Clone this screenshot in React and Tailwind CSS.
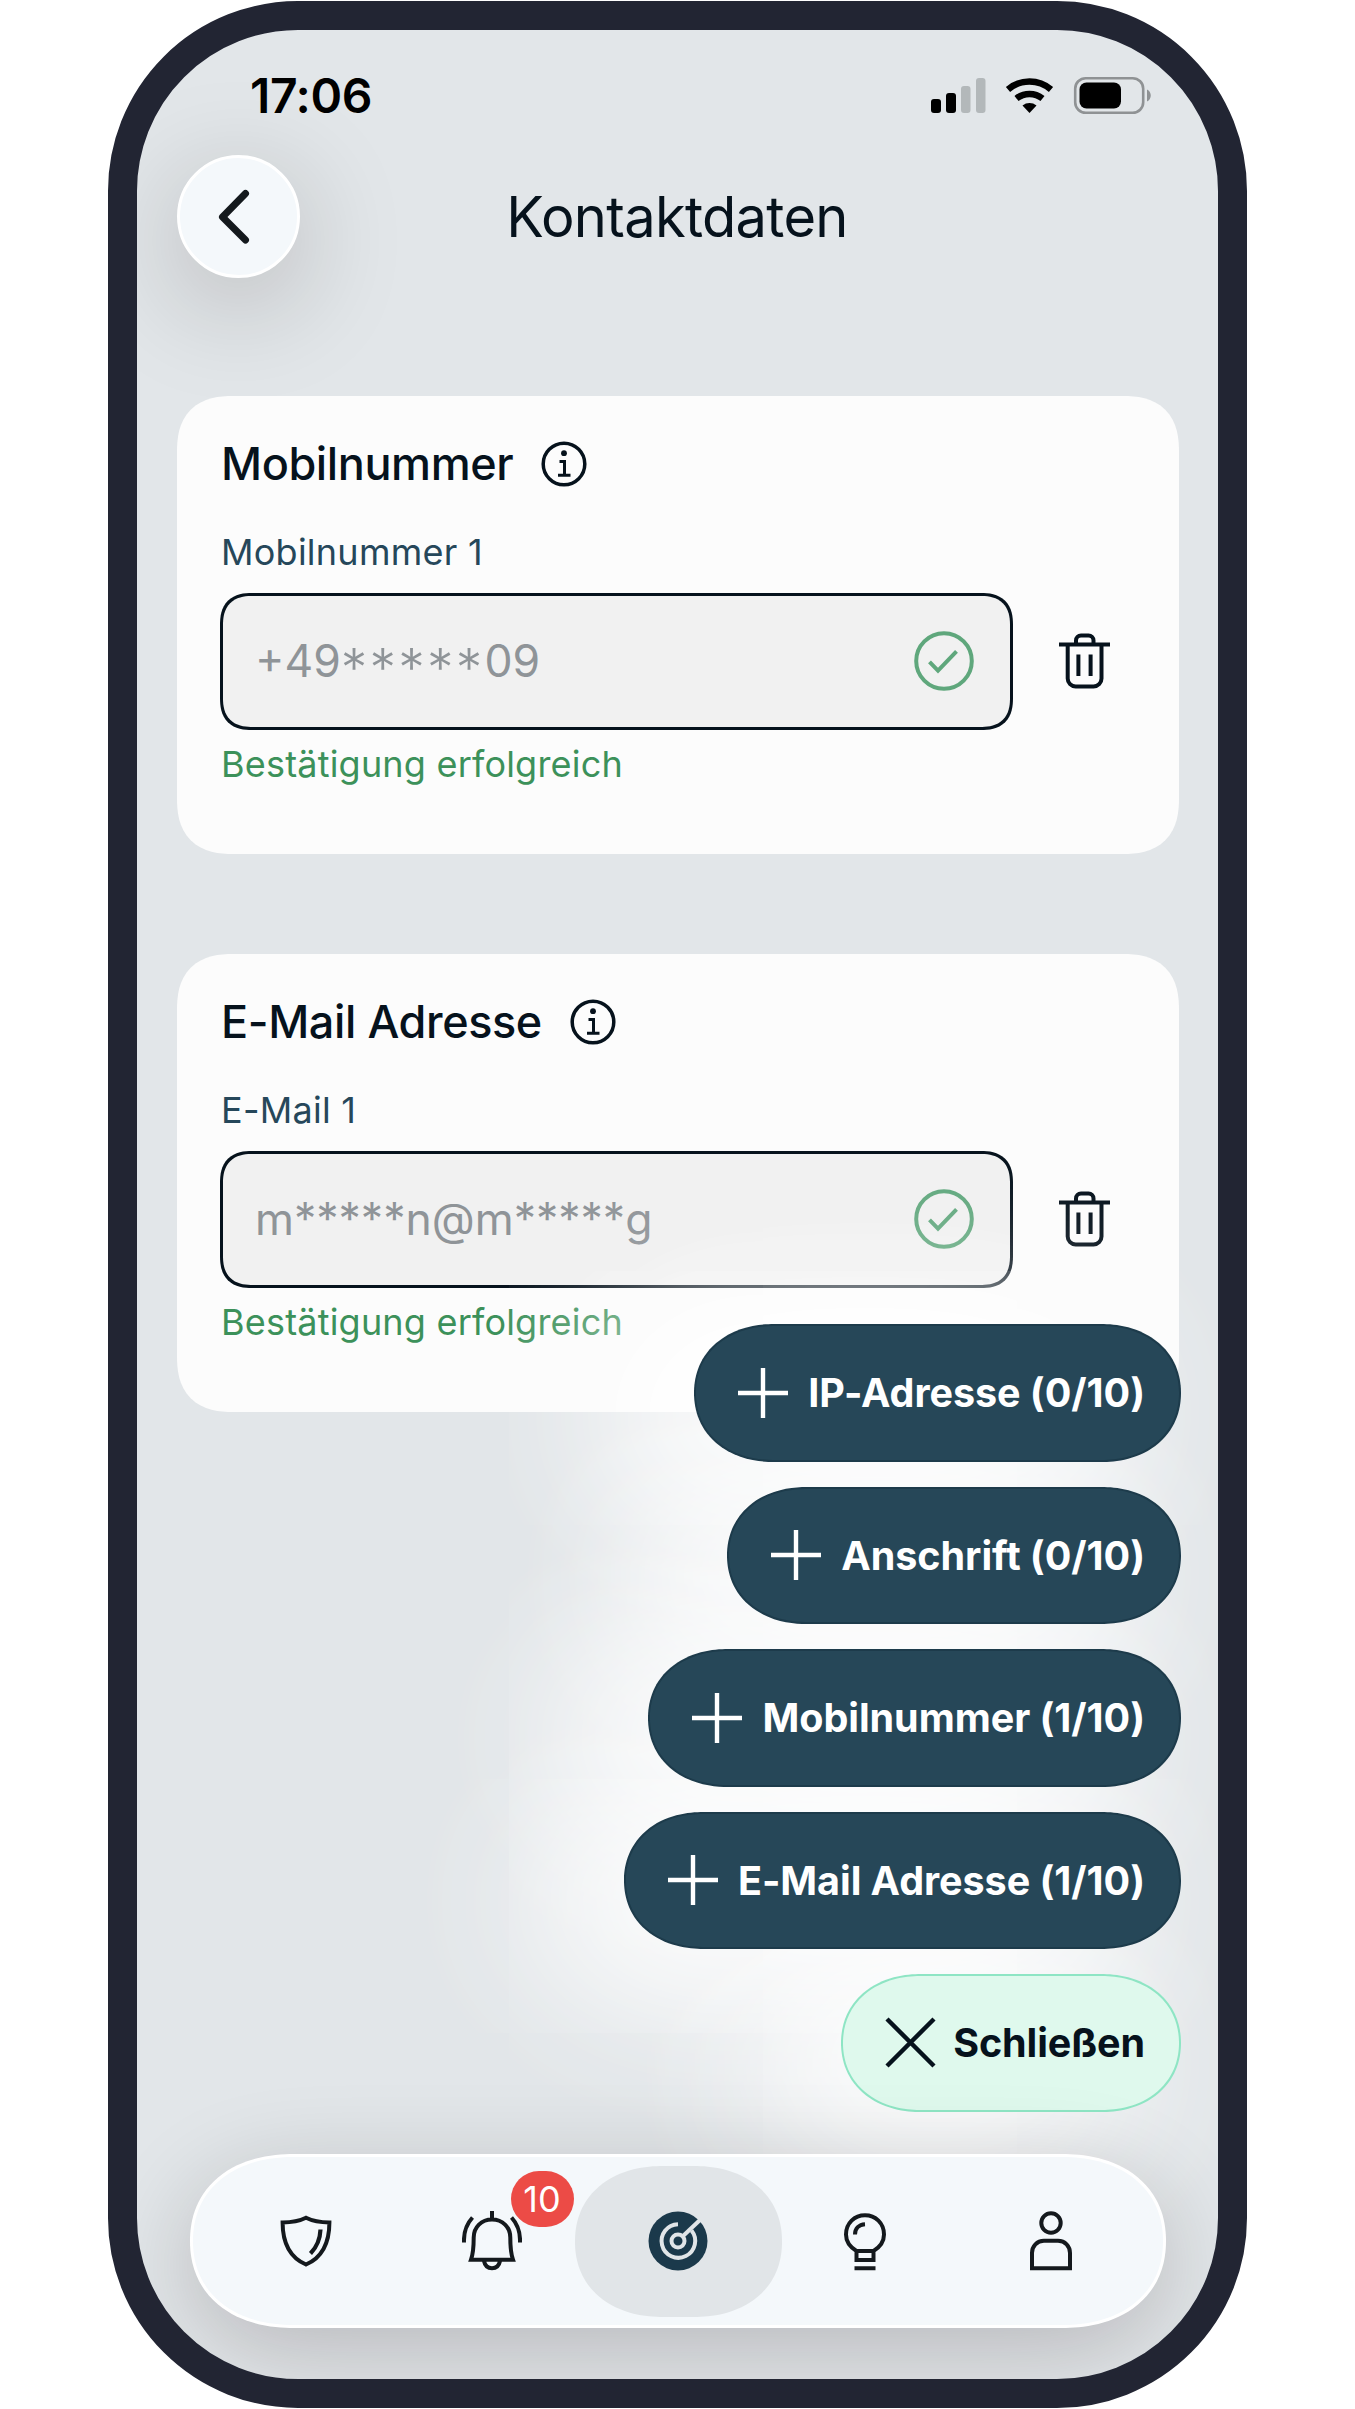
import { clsx } from "clsx";

const CONTACTS = [
  {
    title: "Mobilnummer",
    label: "Mobilnummer 1",
    value: (
      <>
        +49
        <span className="relative top-[10px] text-[53px] font-light leading-none tracking-[2.2px]">*****</span>
        09
      </>
    ),
    status: "Bestätigung erfolgreich",
  },
  {
    title: "E-Mail Adresse",
    label: "E-Mail 1",
    value: "m*****n@m*****g",
    status: "Bestätigung erfolgreich",
  },
];

const ACTIONS = [
  { label: "IP-Adresse (0/10)", width: "w-[487px]" },
  { label: "Anschrift (0/10)", width: "w-[454px]" },
  { label: "Mobilnummer (1/10)", width: "w-[533px]" },
  { label: "E-Mail Adresse (1/10)", width: "w-[557px]" },
];

// Pill with a white glow that sits behind every other pill of the menu
const PILL =
  "relative flex h-[137.5px] items-center justify-between border-2 pl-[42px] pr-[34px] rounded-[80px/69px] [corner-shape:superellipse(1.1)] before:absolute before:inset-0 before:-z-10 before:rounded-full before:shadow-[-74px_20px_180px_4px_#fff,-74px_20px_170px_#fff] before:content-['']";

const InfoIcon = () => (
  <svg className="size-[46px]" viewBox="0 0 46 46" fill="none" stroke="#06121c" strokeWidth="3.5">
    <circle cx="23" cy="23" r="20.8" />
    <path d="M18.5 20.5h5v13.5M17 34.2h12.5" strokeWidth="3" />
    <circle cx="23" cy="12.2" r="2.9" fill="#06121c" stroke="none" />
  </svg>
);

const CheckIcon = () => (
  <svg className="size-[60px]" viewBox="0 0 60 60" fill="none" stroke="#5fa77c" strokeWidth="4">
    <circle cx="30" cy="30" r="27.8" />
    <path d="M15.5 30.8 24 39.6 42.5 20.4" />
  </svg>
);

const TrashIcon = () => (
  <svg className="h-[56px] w-[51px]" viewBox="0 0 51 56" fill="none" stroke="#06121c" strokeWidth="4">
    <path d="M0 11.4h51M17 11V7.4a5 5 0 0 1 5-5h7.5a5 5 0 0 1 5 5V11" />
    <path d="M8.7 12v33.5a8 8 0 0 0 8 8h17.8a8 8 0 0 0 8-8V12M19.4 21.5v21.5M31.6 21.5v21.5" />
  </svg>
);

const PlusIcon = () => (
  <svg className="size-[50px]" viewBox="0 0 50 50" fill="none" stroke="#fff" strokeWidth="4.4">
    <path d="M25 0v50M0 25h50" />
  </svg>
);

const ShieldIcon = () => (
  <svg className="size-[60px]" viewBox="0 0 60 60" fill="none" stroke="#14191d" strokeWidth="4">
    <path d="M30 6.7c-7 3.5-14.5 4.7-23.4 4.7C6.6 31 13 46 30 53.5 47 46 53.4 31 53.4 11.4 44.5 11.4 37 10.2 30 6.7Z" />
    <path d="M44.5 18.5c-.4 10-3.2 17-10 24" strokeWidth="4.2" />
  </svg>
);

const BellIcon = () => (
  <svg className="size-[60px]" viewBox="0 0 60 60" fill="none" stroke="#14191d" strokeWidth="4">
    <path d="M30 0v8.5M9 48.7c2.7-7.5 2.7-15 2.7-22.2C11.7 16 19.5 8.5 30 8.5S48.3 16 48.3 26.5c0 7.2 0 14.7 2.7 22.2ZM22 50c1 5 4 7.2 8 7.2s7-2.2 8-7.2" />
    <path d="M10.5 6.5C5 12.5 1.5 20.5 2 31.5M49.5 6.5C55 12.5 58.5 20.5 58 31.5" />
  </svg>
);

const RadarIcon = () => (
  <svg className="size-[60px]" viewBox="0 0 60 60" fill="none" stroke="#e1e5e8" strokeWidth="4">
    <circle cx="30" cy="30" r="29.5" fill="#1b394b" stroke="none" />
    <path d="M30 13.2A16.8 16.8 0 1 0 43.5 19.5" />
    <circle cx="30" cy="30" r="6.5" />
    <path d="M34.5 25.5 53 8" />
  </svg>
);

const BulbIcon = () => (
  <svg className="size-[60px]" viewBox="0 0 60 60" fill="none" stroke="#14191d" strokeWidth="4">
    <path d="M21.5 40C15 36 11 31 11 23.5 11 12 19.5 4.3 30 4.3s19 7.7 19 19.2c0 7.5-4 12.5-10.5 16.5ZM21.5 40v9h17v-9M19.5 57.3h21" />
    <path d="M20 23.5c0-6 4-10 10-10.3" />
  </svg>
);

const PersonIcon = () => (
  <svg className="size-[60px]" viewBox="0 0 60 60" fill="none" stroke="#14191d" strokeWidth="4">
    <circle cx="30" cy="12" r="9.7" />
    <path d="M11 57.3V42c0-7 5-12.2 12-12.2h14c7 0 12 5.2 12 12.2v15.3Z" />
  </svg>
);

const NAV = [
  { id: "shield", icon: <ShieldIcon /> },
  { id: "alerts", icon: <BellIcon />, badge: 10 },
  { id: "radar", icon: <RadarIcon />, active: true },
  { id: "tips", icon: <BulbIcon /> },
  { id: "profile", icon: <PersonIcon /> },
];

function StatusBar() {
  return (
    <div className="flex h-[124px] items-start justify-between pl-[113px] pr-[66px] pt-[39px]">
      <span className="text-[48px] font-semibold leading-[54px] tracking-[-0.4px] text-black">17:06</span>
      <svg className="mt-[7px] h-[40px] w-[222px]" viewBox="0 0 222 40">
        <rect x="1" y="23" width="10" height="14" rx="3" />
        <rect x="16" y="17" width="10" height="20" rx="3" />
        <rect x="31" y="10" width="9.5" height="27" rx="3" fill="#b3b8ba" />
        <rect x="46" y="2" width="9.5" height="35" rx="3" fill="#b3b8ba" />
        <path d="M78 13.5a33 33 0 0 1 43 0" fill="none" stroke="#000" strokeWidth="6.5" />
        <path d="M86.5 22.5a21 21 0 0 1 26 0" fill="none" stroke="#000" strokeWidth="6.5" />
        <path d="M92.5 29.5a11.5 11.5 0 0 1 14 0L99.5 37Z" />
        <rect x="145.2" y="2.2" width="68" height="34.6" rx="10.5" fill="none" stroke="#8f9294" strokeWidth="2.6" />
        <rect x="149.5" y="6.5" width="41.5" height="26" rx="7" />
        <path d="M217 13.5c5 2 5 10 0 12Z" fill="#8f9294" />
      </svg>
    </div>
  );
}

function ContactCard({ title, label, value, status }) {
  return (
    <section className="h-[458px] rounded-[56px] bg-[#fcfcfc] pl-[43px] pt-[38px] [corner-shape:superellipse(1.3)]">
      <div className="flex h-[60px] items-center gap-[28px] pl-px">
        <h2 className="text-[45px] font-medium tracking-[-0.4px] text-[#06121c]">{title}</h2>
        <InfoIcon />
      </div>
      <p className="mt-[36px] pl-px text-[36px] leading-[44px] tracking-[0.25px] text-[#26475a]">{label}</p>
      <div className="mt-[19px] flex items-center gap-[46px]">
        <div className="flex h-[137px] w-[793px] items-center justify-between rounded-[32px] border-[3px] border-[#06121c] bg-[#f1f1f1] pl-[32px] pr-[36px] [corner-shape:superellipse(1.3)]">
          <span className="text-[44.5px] leading-[60px] text-[#8f9498]">{value}</span>
          <CheckIcon />
        </div>
        <TrashIcon />
      </div>
      <p className="mt-[12px] pl-px text-[36px] leading-[44px] tracking-[0.2px] text-[#3c915a]">{status}</p>
    </section>
  );
}

export default function App() {
  return (
    <div className="h-[2409px] w-[1355px] bg-white pl-[108px] pt-px font-['Inter',sans-serif]">
      <div className="relative flex h-[2407px] w-[1139px] flex-col overflow-hidden rounded-[190px] border-[29px] border-[#222533] bg-[#e2e6e9]">
        <StatusBar />

        <header className="flex h-[124px] items-center px-[40px]">
          <button className="flex size-[123px] shrink-0 items-center justify-center rounded-full border-[3px] border-white bg-[#f4f8fb] shadow-[0_24px_110px_rgba(20,0,10,0.22)]">
            <svg className="size-[60px]" viewBox="0 0 60 60" fill="none" stroke="#14191d" strokeWidth="7" strokeLinecap="round" strokeLinejoin="round">
              <path d="M36.5 7.5 13.5 31 36.5 54" />
            </svg>
          </button>
          <h1 className="flex-1 pr-[124px] pt-[2px] text-center text-[56px] tracking-[-0.7px] text-[#06121c]">Kontaktdaten</h1>
        </header>

        <main className="mt-[117.5px] flex flex-col gap-[100px] pl-[40px] pr-[39px]">
          {CONTACTS.map((contact) => (
            <ContactCard key={contact.title} {...contact} />
          ))}
        </main>

        {/* Action menu */}
        <div className="absolute right-[37px] top-[1294px] isolate flex flex-col items-end gap-[25px]">
          {ACTIONS.map((action) => (
            <button key={action.label} className={clsx(PILL, "border-[#1d3b4b] bg-[#264758]", action.width)}>
              <PlusIcon />
              <span className="pt-[2px] text-[39.5px] font-bold tracking-[-0.05px] text-white">{action.label}</span>
            </button>
          ))}
          <button className={clsx(PILL, "w-[340px] border-[#8ee5c4] bg-[#dff9ed]")}>
            <svg className="size-[51px]" viewBox="0 0 51 51" fill="none" stroke="#06121c" strokeWidth="4.4">
              <path d="M2 2l47 47M49 2 2 49" />
            </svg>
            <span className="pt-[2px] text-[39.5px] font-bold tracking-[-0.1px] text-[#06121c]">Schließen</span>
          </button>
        </div>

        {/* Tab bar */}
        <nav className="absolute left-[53px] top-[2124px] flex h-[174px] w-[976px] items-center justify-center rounded-[104px/87px] border-[3px] border-white bg-[#f4f8fb] shadow-[0_24px_96px_rgba(20,0,10,0.2)] [corner-shape:superellipse(1.14)]">
          {NAV.map((item) => (
            <button
              key={item.id}
              className={clsx(
                "relative flex h-[151px] items-center justify-center",
                item.active
                  ? "-mx-[10px] w-[207px] rounded-[88px/75px] bg-[#e1e5e8] [corner-shape:superellipse(1.12)]"
                  : "w-[186px]"
              )}
            >
              {item.icon}
              {item.badge && (
                <span className="absolute left-[112px] top-[5px] flex h-[56px] w-[63px] items-center justify-center rounded-full bg-[#ec4b46] text-[36px] text-white">
                  {item.badge}
                </span>
              )}
            </button>
          ))}
        </nav>
      </div>
    </div>
  );
}
